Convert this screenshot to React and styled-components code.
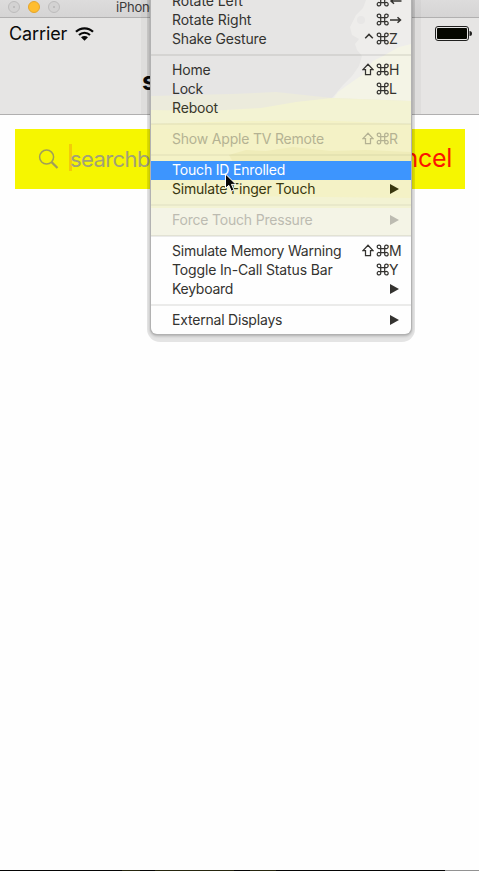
import React from "react";
import styled, { createGlobalStyle } from "styled-components";

const Global = createGlobalStyle`
  * { box-sizing: border-box; }
  body { margin: 0; background: #fefefe; }
`;

const Screen = styled.main`
  position: relative;
  display: flex;
  flex-direction: column;
  width: 479px;
  height: 871px;
  overflow: hidden;
  background: #fefefe;
  color: #0a0a0a;
  font-family: Inter, "Liberation Sans", sans-serif;
  white-space: nowrap;
`;

const TitleBar = styled.header`
  display: flex;
  align-items: flex-start;
  height: 18px;
  padding: 1px 0 0 8px;
  background: linear-gradient(#dddcdc, #d5d4d4);
  border-bottom: 1px solid #b1b0b0;
`;

const Light = styled.i`
  width: 12px;
  height: 12px;
  margin-right: 8px;
  border-radius: 50%;
  border: 1px solid ${(p) => (p.$active ? "#e5a52b" : "#bdbcbc")};
  background: ${(p) =>
    p.$active ? "#ffbd2e" : "radial-gradient(circle, #bdbcbc 0 1px, #d3d2d2 1.5px)"};
`;

const WindowTitle = styled.span`
  margin: -2px 0 0 48px;
  font-size: 13px;
  line-height: 16px;
  letter-spacing: -0.25px;
  color: #3c3b3b;
`;

const NavArea = styled.section`
  height: 97px;
  background: #e6e5e4;
  border-bottom: 1px solid #b0afaf;
`;

const StatusBar = styled.div`
  display: flex;
  align-items: center;
  height: 31px;
  padding: 0 7px 0 9px;
`;

const Carrier = styled.span`
  font-size: 18px;
  line-height: 24px;
  letter-spacing: -0.1px;
  margin-right: 8px;
`;

const StatusIcon = styled.svg`
  display: block;
  flex: none;
  margin-left: ${(p) => (p.$end ? "auto" : 0)};
`;

const NavTitle = styled.h1`
  margin: 17px 0 0 142px;
  font-size: 25px;
  line-height: 30px;
  font-weight: 700;
`;

const SearchBar = styled.section`
  display: flex;
  align-items: center;
  height: 60px;
  margin: 14px 14px 0 15px;
  padding: 0 13px 0 23px;
  background: #f6f600;
`;

const Caret = styled.i`
  width: 3px;
  height: 27px;
  margin: -3px -2px 0 10px;
  background: #f3cc08;
`;

const Placeholder = styled.span`
  font-size: 22px;
  line-height: 30px;
  letter-spacing: -0.6px;
  color: #a2a178;
`;

const Cancel = styled.span`
  margin-left: auto;
  font-size: 25px;
  line-height: 30px;
  letter-spacing: -0.3px;
  color: #fb1400;
  transform: translateY(-1px);
`;

const Footer = styled.footer`
  height: 1px;
  margin-top: auto;
  background: linear-gradient(90deg, #050505 0 122px, #26260e 122px 140px, #050505 140px 155px, #26260e 155px 234px, #050505 234px 250px, #26260e 250px 276px, #050505 276px 445px, #929292 445px);
`;

const MenuShadow = styled.div`
  position: absolute;
  left: 147px;
  top: 0;
  width: 268px;
  height: 342px;
  background: rgba(0, 0, 0, 0.1);
  border-radius: 0 0 13px 13px;
`;

const NavShade = styled.div`
  position: absolute;
  left: 141px;
  top: 0;
  width: 280px;
  height: 114px;
  background: rgba(0, 0, 0, 0.03);
`;

const MenuFrame = styled.div`
  position: absolute;
  left: 150px;
  top: -8px;
  width: 262px;
  height: 343px;
  background: #b2b2b2;
  border-radius: 0 0 7px 7px;
  box-shadow: 0 1px 3px rgba(0, 0, 0, 0.25);
`;

const Menu = styled.nav`
  position: absolute;
  left: 151px;
  top: -8px;
  width: 260px;
  height: 342px;
  overflow: hidden;
  background: #fefefe;
  border-radius: 0 0 6px 6px;
`;

const Backdrop = styled.svg`
  position: absolute;
  left: 0;
  top: 8px;
`;

const MenuList = styled.div`
  position: relative;
  display: flex;
  flex-direction: column;
`;

const Item = styled.div`
  display: flex;
  align-items: center;
  justify-content: space-between;
  height: 19px;
  padding: 0 9px 2px 21px;
  font-size: 14px;
  line-height: 17px;
  background: ${(p) => (p.$selected ? "#3d95fe" : "transparent")};
  color: ${(p) => (p.$selected ? "#fff" : p.$disabled ? p.$disabled : p.$ink || "#343330")};
`;

const Label = styled.span`
  line-height: 17px;
  letter-spacing: ${(p) => p.$track}px;
`;

const Keys = styled.span`
  display: grid;
  grid-template-columns: 14px 13px 13px;
  align-items: center;
  width: 40px;
  height: 17px;
  justify-items: start;
`;

const Glyph = styled.span`
  grid-column: 3;
  grid-row: 1;
  font-size: 14px;
  line-height: 17px;
`;

const KeyIcon = styled.svg`
  grid-column: ${(p) => p.$col};
  grid-row: 1;
  display: block;
  fill: none;
  stroke: currentColor;
  stroke-width: ${(p) => p.$weight || 1.25};
`;

const Arrow = styled.svg`
  display: block;
  margin: 1px 3px 0 0;
  fill: currentColor;
`;

const Separator = styled.div`
  display: flex;
  align-items: center;
  height: 12px;
  &::before {
    content: "";
    flex: 1;
    height: 2px;
    background: rgba(70, 70, 60, ${(p) => (p.$soft ? 0.055 : 0.1)});
  }
`;

const Pointer = styled.svg`
  position: absolute;
  left: 224px;
  top: 173px;
`;

const Command = () => (
  <KeyIcon $col={2} width="13" height="13" viewBox="-0.7 0 13 13">
    <path d="M4 4.5H8V8.5H4ZM4 4.5H2.5A1.75 1.75 0 1 1 4 3ZM8 4.5V3A1.75 1.75 0 1 1 9.5 4.5ZM8 8.5H9.5A1.75 1.75 0 1 1 8 10ZM4 8.5V10A1.75 1.75 0 1 1 2.5 8.5Z" />
  </KeyIcon>
);

const Shift = () => (
  <KeyIcon $col={1} width="12" height="13" viewBox="0 0 12 13">
    <path d="M6 1.2L11 6.5H8.5V11.5H3.5V6.5H1Z" />
  </KeyIcon>
);

const Control = () => (
  <KeyIcon $col={1} $weight={1.5} width="13" height="13" viewBox="0 0 13 13">
    <path d="M3.2 6.2L7 2.4L10.8 6.2" />
  </KeyIcon>
);

const DirectionKey = ({ left }) => (
  <KeyIcon $col={3} $weight={1.5} width="13" height="13" viewBox="0 0 13 13">
    {left ? (
      <path d="M12.5 7H2.5M5 4.2L2 7L5 9.8" />
    ) : (
      <path d="M1 7H11M8.5 4.2L11.5 7L8.5 9.8" />
    )}
  </KeyIcon>
);

const entries = [
  { label: "Rotate Left", track: -0.08, key: "left" },
  { label: "Rotate Right", track: -0.06, key: "right" },
  { label: "Shake Gesture", track: -0.17, mod: "control", key: "Z" },
  { separator: true },
  { label: "Home", track: -0.2, mod: "shift", key: "H" },
  { label: "Lock", track: -0.25, key: "L" },
  { label: "Reboot", track: -0.15, ink: "#38372a" },
  { separator: true, soft: true },
  { label: "Show Apple TV Remote", track: -0.2, mod: "shift", key: "R", disabled: "#b4b293" },
  { separator: true, soft: true },
  { label: "Touch ID Enrolled", track: -0.18, selected: true },
  { label: "Simulate Finger Touch", track: -0.2, sub: true, ink: "#39370f" },
  { separator: true, soft: true },
  { label: "Force Touch Pressure", track: -0.2, sub: true, disabled: "#bcbbb1" },
  { separator: true },
  { label: "Simulate Memory Warning", track: -0.22, mod: "shift", key: "M" },
  { label: "Toggle In-Call Status Bar", track: -0.15, key: "Y" },
  { label: "Keyboard", track: -0.27, sub: true },
  { separator: true },
  { label: "External Displays", track: -0.2, sub: true },
];

function MenuItem({ entry }) {
  const { label, track, key, mod, sub, selected, disabled, ink } = entry;
  return (
    <Item $selected={selected} $disabled={disabled} $ink={ink}>
      <Label $track={track}>{label}</Label>
      {key && (
        <Keys>
          {mod === "shift" && <Shift />}
          {mod === "control" && <Control />}
          <Command />
          {key === "left" || key === "right" ? (
            <DirectionKey left={key === "left"} />
          ) : (
            <Glyph>{key}</Glyph>
          )}
        </Keys>
      )}
      {sub && (
        <Arrow width="9" height="10" viewBox="0 0 9 10">
          <path d="M0 0L9 5L0 10Z" />
        </Arrow>
      )}
    </Item>
  );
}

export default function App() {
  return (
    <>
      <Global />
      <Screen>
        <TitleBar>
          <Light />
          <Light $active />
          <Light />
          <WindowTitle>iPhone</WindowTitle>
        </TitleBar>
        <NavArea>
          <StatusBar>
            <Carrier>Carrier</Carrier>
            <StatusIcon width="19" height="14" viewBox="0 0 19 14">
              <g fill="none" stroke="#080808" strokeWidth="2.2">
                <path d="M1 4.8C5.6.1 13.4.1 18 4.8" />
                <path d="M4 8C7.2 5 11.8 5 15 8" />
              </g>
              <path d="M6 10.2C8 8.5 11 8.5 13 10.2L9.5 13.7Z" fill="#080808" />
            </StatusIcon>
            <StatusIcon $end width="37" height="15" viewBox="0 0 37 15">
              <rect x=".5" y=".5" width="33" height="14" rx="2.5" fill="none" stroke="#20201f" />
              <rect x="2" y="2" width="30" height="11" rx="1" fill="#050700" />
              <path d="M34.5 5Q37 5 37 7.5Q37 10 34.5 10Z" fill="#20201f" />
            </StatusIcon>
          </StatusBar>
          <NavTitle>s</NavTitle>
        </NavArea>
        <SearchBar>
          <StatusIcon width="21" height="21" viewBox="0 0 21 21" fill="none" stroke="#a09e58">
            <circle cx="8.6" cy="8.1" r="7" strokeWidth="1.5" />
            <path d="M13.6 13.1L19.5 19" strokeWidth="2.2" />
          </StatusIcon>
          <Caret />
          <Placeholder>searchbar</Placeholder>
          <Cancel>Cancel</Cancel>
        </SearchBar>
        <Footer />
        <NavShade />
        <MenuShadow />
        <MenuFrame />
        <Menu>
          <Backdrop width="260" height="334" viewBox="0 0 260 334">
            <path fill="#e6e5e4" d="M0 0H260V120H0Z" />
            <path fill="#eeedeb" d="M215 0L212 8L205 15L199 27L201 35L208 39L204 44L206 50L211 56L208 66L201 76L192 85L181 98H260V0Z" />
            <circle cx="210" cy="20" r="4" fill="#e8e7e6" />
            <path fill="#f4f4e6" d="M260 44L248 47L232 56L222 61L211 75L198 84L187 92L180 102H260Z" />
            <path fill="#ecebdc" d="M0 96L80 94L125 92L181 98L260 101V208H0Z" />
            <path fill="#f3f3d3" d="M0 110L56 111L110 108L145 102L181 98L260 101V208H0Z" />
            <path fill="#f4f2c6" d="M0 124L60 122L160 120L260 124V198L90 196L70 190H0Z" />
            <path fill="#efecb9" d="M78 155L95 150L115 151L142 147L180 151L215 150L260 152V162H82Z" />
            <path fill="#f4f4e6" d="M0 208H260V236H0Z" />
          </Backdrop>
          <MenuList>
            {entries.map((entry, i) =>
              entry.separator ? (
                <Separator key={i} $soft={entry.soft} />
              ) : (
                <MenuItem key={i} entry={entry} />
              )
            )}
          </MenuList>
        </Menu>
        <Pointer width="14" height="20" viewBox="0 0 14 20">
          <path
            d="M1.5 1V15.3L4.8 12.3L7.2 18.2L10 17L7.5 11.4H12Z"
            fill="#080808"
            stroke="#fff"
            strokeWidth="1"
          />
        </Pointer>
      </Screen>
    </>
  );
}
